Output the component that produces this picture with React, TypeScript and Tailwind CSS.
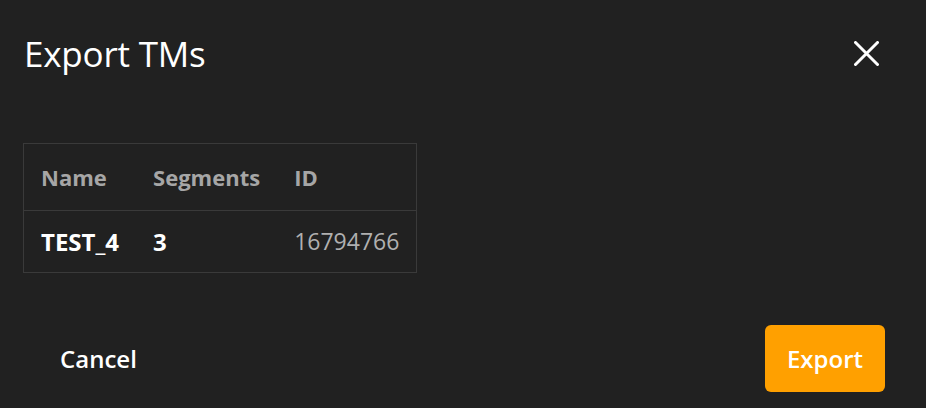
export default function App() {
  const rows = [{ name: 'TEST_4', segments: 3, id: 16794766 }];

  return (
    <div
      className="w-[926px] h-[408px] bg-[#212121] text-white flex flex-col"
      style={{ fontFamily: '"Open Sans", "Noto Sans", sans-serif' }}
    >
      {/* Header */}
      <div className="flex items-center justify-between h-[106px] pl-6 pr-[47px]">
        <h1 className="text-[35px] leading-none font-normal tracking-[-0.2px]">Export TMs</h1>
        <button className="w-[25px] h-[25px] flex items-center justify-center">
          <svg width="25" height="25" viewBox="0 0 25 25" fill="none">
            <path d="M1.5 1.5 L23.5 23.5 M23.5 1.5 L1.5 23.5" stroke="white" strokeWidth="3" strokeLinecap="round" />
          </svg>
        </button>
      </div>

      {/* Table */}
      <div className="ml-[23px] mt-[37px]">
        <table className="border border-[#3a3a3a] border-collapse text-[23px]">
          <thead>
            <tr className="border-b border-[#3a3a3a] text-[22px]">
              <th className="h-[67px] px-[17px] text-left font-bold text-[#a6a6a6]">Name</th>
              <th className="h-[67px] px-[17px] text-left font-bold text-[#a6a6a6]">Segments</th>
              <th className="h-[67px] px-[17px] text-left font-bold text-[#a6a6a6]">ID</th>
            </tr>
          </thead>
          <tbody>
            {rows.map((r) => (
              <tr key={r.id}>
                <td className="h-[62px] px-[17px] text-[24px] font-bold">{r.name}</td>
                <td className="h-[62px] px-[17px] text-[24px] font-bold">{r.segments}</td>
                <td className="h-[62px] px-[17px] text-[#b0b0b0]">{r.id}</td>
              </tr>
            ))}
          </tbody>
        </table>
      </div>

      {/* Footer */}
      <div className="mt-auto flex items-center justify-between pb-4 pr-[41px]">
        <button className="pl-[60px] text-[24px] font-semibold">Cancel</button>
        <button className="w-[120px] h-[67px] rounded-[6px] bg-[#ffa000] text-[24px] font-semibold">
          Export
        </button>
      </div>
    </div>
  );
}
